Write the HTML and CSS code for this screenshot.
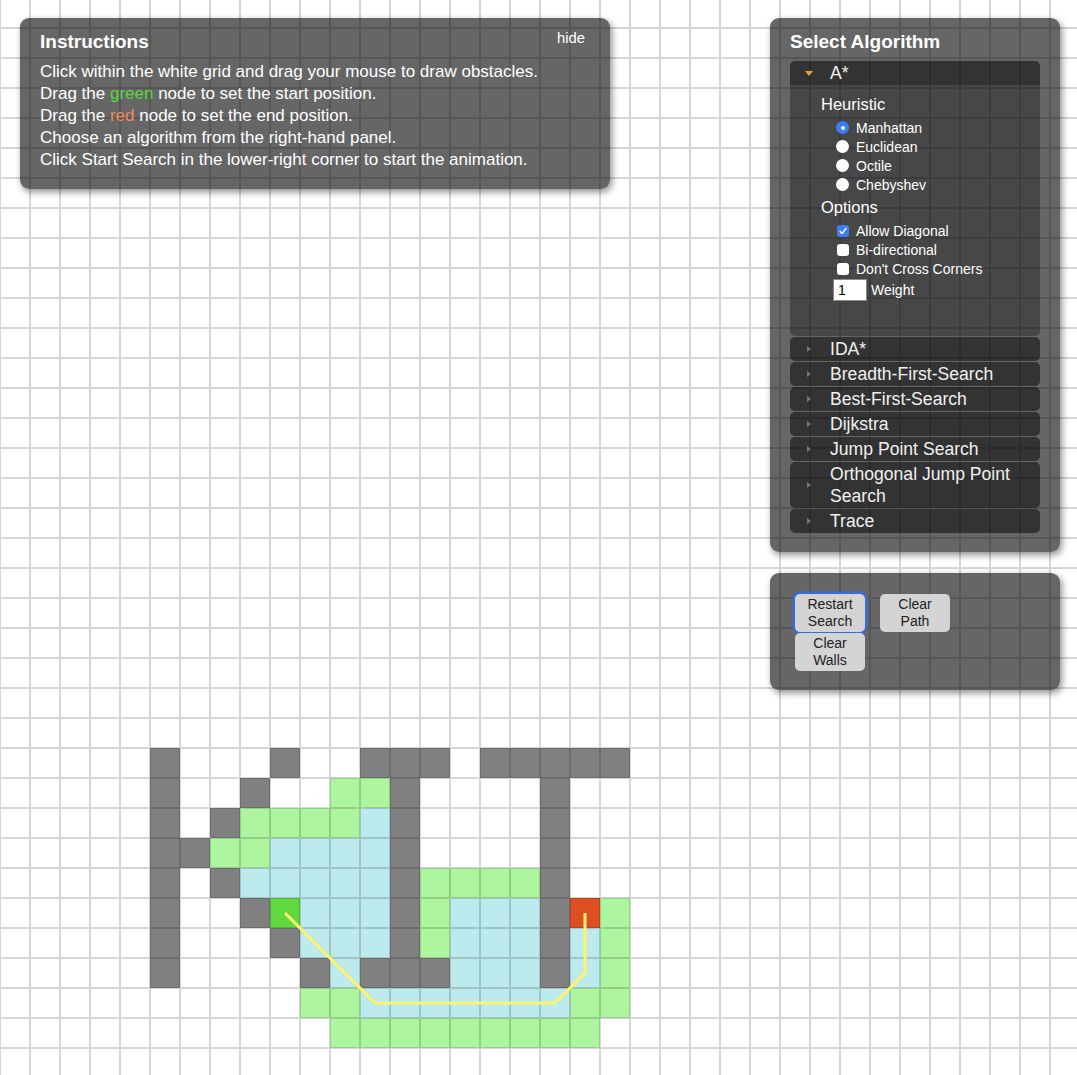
FILE: index.html
```html
<!DOCTYPE html>
<html>
<head>
<meta charset="utf-8">
<title>PathFinding</title>
<link rel="stylesheet" href="styles.css">
</head>
<body>
<svg class="grid" width="1077" height="1075" viewBox="0 0 1077 1075">
  <defs>
    <pattern id="cell" width="30" height="30" patternUnits="userSpaceOnUse" x="0" y="-2">
      <rect x="0" y="0" width="1" height="30" class="gl"/>
      <rect x="29" y="0" width="1" height="30" class="gl"/>
      <rect x="1" y="0" width="28" height="1" class="gl"/>
      <rect x="1" y="29" width="28" height="1" class="gl"/>
    </pattern>
  </defs>
  <g class="wall">
    <rect x="150" y="748" width="30" height="240"/>
    <rect x="390" y="748" width="30" height="240"/>
    <rect x="540" y="748" width="30" height="240"/>
    <rect x="270" y="748" width="30" height="30"/>
    <rect x="360" y="748" width="30" height="30"/>
    <rect x="420" y="748" width="30" height="30"/>
    <rect x="480" y="748" width="60" height="30"/>
    <rect x="570" y="748" width="60" height="30"/>
    <rect x="240" y="778" width="30" height="30"/>
    <rect x="210" y="808" width="30" height="30"/>
    <rect x="180" y="838" width="30" height="30"/>
    <rect x="210" y="868" width="30" height="30"/>
    <rect x="240" y="898" width="30" height="30"/>
    <rect x="270" y="928" width="30" height="30"/>
    <rect x="300" y="958" width="30" height="30"/>
    <rect x="360" y="958" width="30" height="30"/>
    <rect x="420" y="958" width="30" height="30"/>
  </g>
  <g class="opened">
    <rect x="330" y="778" width="60" height="30"/>
    <rect x="240" y="808" width="120" height="30"/>
    <rect x="210" y="838" width="60" height="30"/>
    <rect x="420" y="868" width="120" height="30"/>
    <rect x="420" y="898" width="30" height="60"/>
    <rect x="600" y="898" width="30" height="90"/>
    <rect x="300" y="988" width="60" height="30"/>
    <rect x="570" y="988" width="60" height="30"/>
    <rect x="330" y="1018" width="270" height="30"/>
  </g>
  <g class="closed">
    <rect x="360" y="808" width="30" height="30"/>
    <rect x="270" y="838" width="120" height="30"/>
    <rect x="240" y="868" width="150" height="30"/>
    <rect x="300" y="898" width="90" height="60"/>
    <rect x="330" y="958" width="30" height="30"/>
    <rect x="450" y="898" width="90" height="90"/>
    <rect x="570" y="928" width="30" height="60"/>
    <rect x="360" y="988" width="210" height="30"/>
  </g>
  <rect class="start" x="270" y="898" width="30" height="30"/>
  <rect class="end" x="570" y="898" width="30" height="30"/>
  <rect x="0" y="0" width="1077" height="1075" fill="url(#cell)"/>
  <polyline class="path" points="285,913 375,1003 555,1003 585,973 585,913"/>
</svg>

<div class="panel instructions">
  <div class="panel-head">
    <h3 class="panel-title">Instructions</h3>
    <span class="hide">hide</span>
  </div>
  <ul class="steps">
    <li>Click within the white grid and drag your mouse to draw obstacles.</li>
    <li>Drag the <span class="green">green</span> node to set the start position.</li>
    <li>Drag the <span class="red">red</span> node to set the end position.</li>
    <li>Choose an algorithm from the right-hand panel.</li>
    <li>Click Start Search in the lower-right corner to start the animation.</li>
  </ul>
</div>

<div class="panel algo">
  <h3 class="panel-title">Select Algorithm</h3>
  <div class="accordion">
    <div class="acc-item">
      <div class="acc-head"><span class="tri-wrap"><span class="tri-down"></span></span><span>A*</span></div>
      <div class="acc-body">
        <div class="opt-title">Heuristic</div>
        <div class="opt-list">
          <div class="opt"><span class="radio on"></span>Manhattan</div>
          <div class="opt"><span class="radio"></span>Euclidean</div>
          <div class="opt"><span class="radio"></span>Octile</div>
          <div class="opt"><span class="radio"></span>Chebyshev</div>
        </div>
        <div class="opt-title second">Options</div>
        <div class="opt-list">
          <div class="opt"><span class="check on"><svg width="13" height="13" viewBox="0 0 13 13"><path d="M3.3 6.8 L5.4 9.2 L9.8 3.6" fill="none" stroke="#fff" stroke-width="1.6" stroke-linecap="round" stroke-linejoin="round"/></svg></span>Allow Diagonal</div>
          <div class="opt"><span class="check"></span>Bi-directional</div>
          <div class="opt"><span class="check"></span>Don't Cross Corners</div>
        </div>
        <div class="weight-row"><span class="weight-input">1</span>Weight</div>
      </div>
    </div>
    <div class="acc-head closed"><span class="tri-wrap"><span class="tri-right"></span></span><span>IDA*</span></div>
    <div class="acc-head closed"><span class="tri-wrap"><span class="tri-right"></span></span><span>Breadth-First-Search</span></div>
    <div class="acc-head closed"><span class="tri-wrap"><span class="tri-right"></span></span><span>Best-First-Search</span></div>
    <div class="acc-head closed"><span class="tri-wrap"><span class="tri-right"></span></span><span>Dijkstra</span></div>
    <div class="acc-head closed"><span class="tri-wrap"><span class="tri-right"></span></span><span>Jump Point Search</span></div>
    <div class="acc-head closed"><span class="tri-wrap"><span class="tri-right"></span></span><span>Orthogonal Jump Point Search</span></div>
    <div class="acc-head closed"><span class="tri-wrap"><span class="tri-right"></span></span><span>Trace</span></div>
  </div>
</div>

<div class="panel controls">
  <div class="btns">
    <button class="btn focus">Restart Search</button>
    <button class="btn">Clear Path</button>
    <button class="btn">Clear Walls</button>
  </div>
</div>
</body>
</html>
```

FILE: styles.css
```css
* { box-sizing: border-box; }
html, body { margin: 0; padding: 0; }
body {
  width: 1077px;
  height: 1075px;
  overflow: hidden;
  position: relative;
  background: #fff;
  font-family: "Liberation Sans", Arial, sans-serif;
}

/* grid canvas */
.grid { display: block; position: absolute; left: 0; top: 0; }
.gl { fill: #000; fill-opacity: 0.16; }
.wall rect { fill: #808080; }
.opened rect { fill: #aef5a0; }
.closed rect { fill: #bdebed; }
.start { fill: #61d83e; }
.end { fill: #dc4f22; }
.path { fill: none; stroke: #fff36a; stroke-width: 3; stroke-linejoin: miter; }

/* panels */
.panel {
  position: absolute;
  background: rgba(0, 0, 0, 0.6);
  color: #fff;
  border-radius: 9px;
  box-shadow: 2px 3px 7px rgba(0, 0, 0, 0.45);
}
.panel-title { margin: 0; font-size: 19px; line-height: 22px; font-weight: bold; }

.instructions { left: 20px; top: 18px; width: 590px; height: 171px; padding: 13px 25px 0 20px; }
.panel-head { display: flex; justify-content: space-between; align-items: flex-start; }
.hide { font-size: 14.8px; line-height: 18px; margin-top: -2px; }
.steps { list-style: none; margin: 8px 0 0; padding: 0; font-size: 17px; line-height: 22px; }
.green { color: #5ad83e; }
.red { color: #ef8a5e; }

/* algorithm panel */
.algo { left: 770px; top: 18px; width: 290px; height: 534px; padding: 13px 20px 0; }
.accordion { margin-top: 8px; display: flex; flex-direction: column; gap: 1px; }
.acc-head {
  display: flex;
  align-items: center;
  min-height: 24px;
  padding: 1px 0 1px 15px;
  background: rgba(0, 0, 0, 0.5);
  border-radius: 5px;
  font-size: 17.6px;
  line-height: 22px;
  color: #f0f0f0;
}
.acc-item .acc-head { border-radius: 5px 5px 0 0; }
.tri-wrap { width: 25px; flex: none; display: flex; align-items: center; }
.tri-down {
  width: 0; height: 0;
  border-left: 4px solid transparent;
  border-right: 4px solid transparent;
  border-top: 5px solid #f0a030;
}
.tri-right {
  width: 0; height: 0;
  margin-left: 2px;
  border-top: 3.5px solid transparent;
  border-bottom: 3.5px solid transparent;
  border-left: 4px solid #767676;
}
.acc-body {
  height: 251px;
  background: rgba(0, 0, 0, 0.3);
  border-radius: 0 0 5px 5px;
  padding: 9px 0 0 31px;
}
.opt-title { font-size: 16.5px; line-height: 20px; color: #fff; }
.opt-title.second { margin-top: 3px; }
.opt-list { margin-top: 4px; }
.opt {
  display: flex;
  align-items: center;
  height: 19px;
  padding-left: 15px;
  font-size: 14px;
  color: #fff;
}
.radio {
  width: 13px; height: 13px;
  border-radius: 50%;
  background: #fff;
  margin-right: 7px;
  flex: none;
  display: flex; align-items: center; justify-content: center;
}
.radio.on { background: #3d7cf2; }
.radio.on::after { content: ""; width: 4px; height: 4px; border-radius: 50%; background: #fff; }
.check {
  width: 12px; height: 12px;
  border-radius: 3px;
  background: #fff;
  margin-left: 1px;
  margin-right: 7px;
  flex: none;
  display: flex; align-items: center; justify-content: center;
}
.check.on { background: #3d7cf2; }
.check svg { display: block; width: 12px; height: 12px; }
.weight-row {
  display: flex;
  align-items: center;
  margin-top: 1px;
  padding-left: 12px;
  font-size: 14px;
  height: 22px;
}
.weight-input {
  width: 34px; height: 22px;
  background: #fff;
  border: 1px solid #8a8a8a;
  color: #000;
  padding-left: 4px;
  line-height: 20px;
  margin-right: 4px;
}

/* controls */
.controls { left: 770px; top: 573px; width: 290px; height: 117px; padding: 21px 0 0 25px; }
.btns { display: grid; grid-template-columns: 70px 70px; column-gap: 15px; row-gap: 1px; align-items: start; }
.btn {
  width: 70px; height: 38px;
  padding: 2px 8px;
  border: none;
  border-radius: 5px;
  background: #d4d4d4;
  color: #222;
  font-family: "Liberation Sans", Arial, sans-serif;
  font-size: 14px;
  line-height: 17px;
}
.btn.focus { box-shadow: 0 0 0 2.5px #3a6cd6; }
```
